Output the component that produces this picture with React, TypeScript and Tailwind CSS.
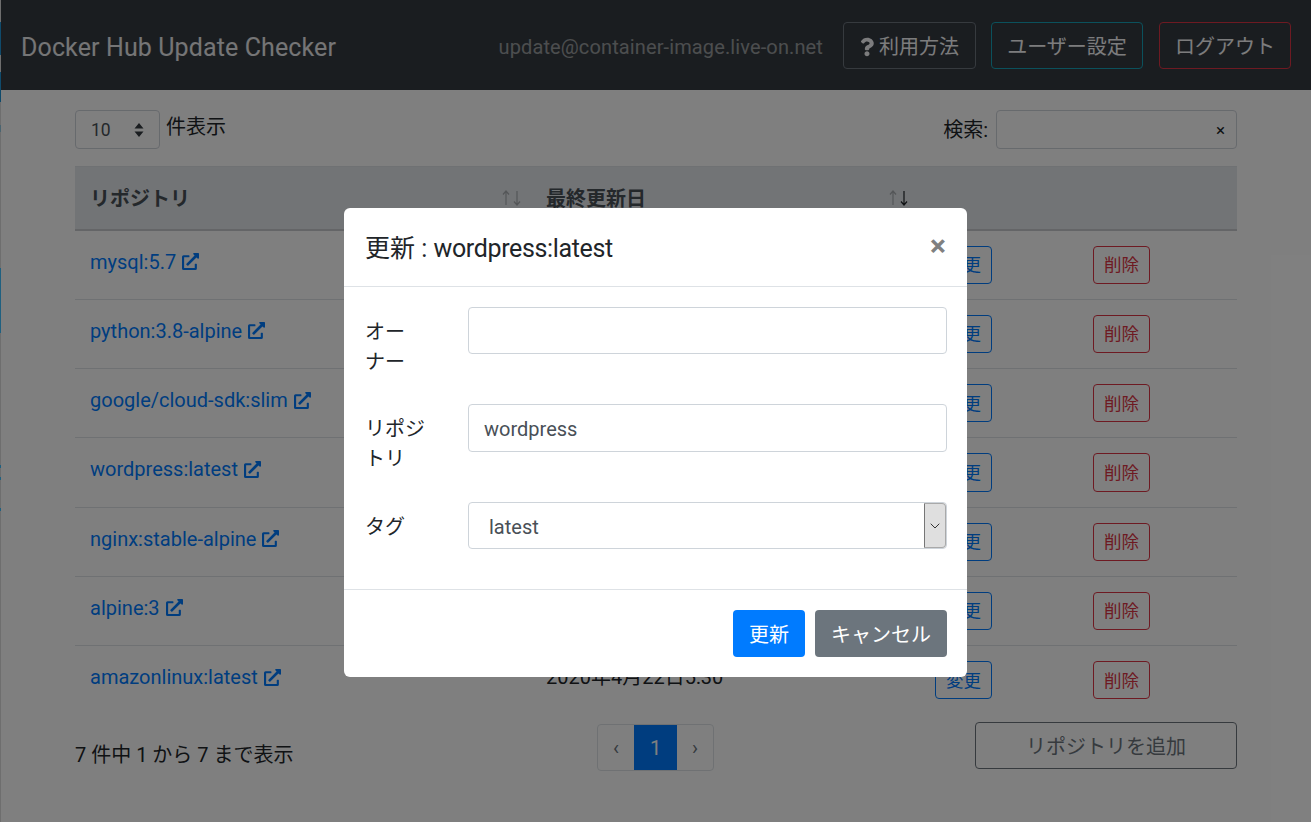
import { ChevronDown } from 'lucide-react'
import { FaExternalLinkAlt, FaQuestion } from 'react-icons/fa'

const rows = [
  { name: 'mysql:5.7', date: '2020年4月22日5:30' },
  { name: 'python:3.8-alpine', date: '2020年4月22日5:30' },
  { name: 'google/cloud-sdk:slim', date: '2020年4月22日5:30' },
  { name: 'wordpress:latest', date: '2020年4月22日5:30' },
  { name: 'nginx:stable-alpine', date: '2020年4月22日5:30' },
  { name: 'alpine:3', date: '2020年4月22日5:30' },
  { name: 'amazonlinux:latest', date: '2020年4月22日5:30' },
]

// the stray 1px window edge on the left of the shot
const edgeMarks = [
  { top: 22, height: 33, color: '#0f4a6b' },
  { top: 72, height: 30, color: '#0f4a6b' },
  { top: 125, height: 7, color: '#4a6470' },
  { top: 268, height: 65, color: '#1f6080' },
  { top: 465, height: 3, color: '#1f6080' },
  { top: 477, height: 3, color: '#1f6080' },
  { top: 508, height: 3, color: '#1f6080' },
]

function Arrow({ down, faded }: { down?: boolean; faded?: boolean }) {
  return (
    <svg viewBox="0 0 8 16" className={`h-4 w-2 fill-none stroke-[#212529] ${faded ? 'opacity-30' : ''}`} strokeWidth="1.2">
      {down ? <path d="M4 1v14M1 11.5 4 15l3-3.5" /> : <path d="M4 15V1M1 4.5 4 1l3 3.5" />}
    </svg>
  )
}

function SortArrows({ active }: { active?: boolean }) {
  return (
    <span className="-mt-[2px] flex gap-[3px]">
      <Arrow faded />
      <Arrow down faded={!active} />
    </span>
  )
}

function NavButton({ color, width, children }: { color: string; width: string; children: React.ReactNode }) {
  return (
    <button className={`flex h-[47px] items-center justify-center rounded border border-solid pt-[3px] text-[20px] text-[#f8f9fa] ${color} ${width}`}>
      {children}
    </button>
  )
}

export default function App() {
  return (
    <div className="relative h-[822px] w-[1311px] overflow-hidden bg-white font-['Roboto','Noto_Sans_CJK_JP',sans-serif] text-[20px] leading-[30px] text-[#212529]">
      <nav className="flex h-[90px] items-center justify-between bg-[#343a40] pl-[21px] pr-5">
        <span className="pt-[5px] text-[25px] tracking-[0.12px] text-white/90">Docker Hub Update Checker</span>
        <div className="flex items-center">
          <span className="mr-5 pt-[4px] text-[20px] tracking-[0.12px] text-white/50">update@container-image.live-on.net</span>
          <NavButton color="border-[#6c757d]" width="w-[133px] mr-[15px]">
            <FaQuestion className="mr-[5px] h-[20px] w-[14px]" />利用方法
          </NavButton>
          <NavButton color="border-[#17a2b8]" width="w-[152px] mr-[16px]">ユーザー設定</NavButton>
          <NavButton color="border-[#dc3545]" width="w-[132px]">ログアウト</NavButton>
        </div>
      </nav>

      <main className="pl-[75px] pr-[74px] pt-5">
        <div className="flex h-[39px] items-start justify-between">
          <div className="flex items-start">
            <div className="flex h-[39px] w-[85px] items-center justify-between rounded border border-[#ced4da] pl-[15px] pr-[15px] text-[17.5px] text-[#495057]">
              10
              <svg viewBox="0 0 10 16" className="h-4 w-[10px] fill-[#343a40]">
                <path d="M5 1 9.5 6.5H.5zM5 15 .5 9.5h9z" />
              </svg>
            </div>
            <span className="ml-[6px] mt-[2px]">件表示</span>
          </div>
          <div className="flex items-center">
            <span className="mr-2">検索:</span>
            <div className="flex h-[39px] w-[241px] items-center justify-end rounded border border-[#ced4da] pr-[11px] text-[17px]">×</div>
          </div>
        </div>

        <table className="mt-[17px] w-[1162px] table-fixed border-collapse">
          <thead>
            <tr className="h-[63px] border-t border-b-2 border-t-[#dee2e6] border-b-[#c8cbcf] bg-[#e4e8ec] text-left text-[#495057]">
              <th className="w-[456px] pl-[15px] pr-[10px] pt-[2px] font-bold">
                <div className="flex items-center justify-between">リポジトリ<SortArrows /></div>
              </th>
              <th className="w-[389px] pl-[15px] pr-[12px] pt-[2px] font-bold">
                <div className="flex items-center justify-between">最終更新日<SortArrows active /></div>
              </th>
              <th className="w-[158px]"></th>
              <th></th>
            </tr>
          </thead>
          <tbody>
            {rows.map((row) => (
              <tr key={row.name} className="border-b border-[#dee2e6] last:border-b-0">
                <td className="py-[15px] pl-[15px] align-top text-[#007bff]">
                  <span className="mt-[1px] flex items-center">
                    {row.name}
                    <FaExternalLinkAlt className="ml-[5px] h-[17px] w-[19px]" />
                  </span>
                </td>
                <td className="py-[15px] pl-[15px] align-top">
                  <span className="mt-[1px] block">{row.date}</span>
                </td>
                <td className="py-[15px] pl-[15px] align-top">
                  <button className="block h-[38.25px] w-[57px] rounded border border-[#007bff] pt-[1px] text-[17.5px] text-[#007bff]">変更</button>
                </td>
                <td className="py-[15px] pl-[15px] align-top">
                  <button className="block h-[38.25px] w-[57px] rounded border border-[#dc3545] pt-[1px] text-[17.5px] text-[#dc3545]">削除</button>
                </td>
              </tr>
            ))}
          </tbody>
        </table>

        <div className="flex items-start">
          <span className="mt-[26px] w-[522px]">7 件中 1 から 7 まで表示</span>
          <div className="mt-[10px] flex h-[47px] overflow-hidden rounded border border-[#dee2e6]">
            <span className="flex w-[36px] items-center justify-center text-[#6c757d]">‹</span>
            <span className="flex w-[43px] items-center justify-center bg-[#007bff] text-white">1</span>
            <span className="flex w-[36px] items-center justify-center text-[#6c757d]">›</span>
          </div>
          <button className="ml-auto mt-[8px] h-[47px] w-[262px] rounded border border-[#6c757d] pt-[2px] text-[#6c757d]">リポジトリを追加</button>
        </div>
      </main>

      {/* backdrop and modal lie over the page */}
      <div className="absolute inset-0 bg-black/50"></div>
      <div className="absolute left-[344px] top-[208px] w-[623px] rounded-md bg-white">
        <div className="flex h-[79px] items-center justify-between border-b border-[#dee2e6] pl-[21px] pr-[21px]">
          <span className="pt-[3px] text-[25px]">更新 : <span className="tracking-[-0.35px]">wordpress:latest</span></span>
          <span className="-mt-[2px] text-[30px] font-bold leading-none text-[#808080]">×</span>
        </div>
        <div className="h-[302px] pl-[21px] pr-5 pt-5">
          <div className="flex items-start">
            <span className="mb-[10px] mt-[10px] w-[103px] pr-[41px]">オー<br />ナー</span>
            <div className="h-[47px] flex-1 rounded border border-[#ced4da]"></div>
          </div>
          <div className="mt-[17px] flex items-start">
            <span className="mb-[10px] mt-[10px] w-[103px] pr-[41px]">リポジトリ</span>
            <div className="flex h-[48px] flex-1 items-center rounded border border-[#ced4da] pl-[15px] pt-[2px] text-[#495057]">wordpress</div>
          </div>
          <div className="mt-[18px] flex items-start">
            <span className="mb-[10px] mt-[10px] w-[103px] pr-[41px]">タグ</span>
            <div className="flex h-[47px] flex-1 items-center justify-between rounded border border-[#ced4da] pl-[20px] text-[#495057]">
              <span className="pt-[2px]">latest</span>
              <div className="flex h-full w-[22px] items-center justify-center rounded-r border border-[#a9a9a9] border-l-[#767676] bg-[#dfdfdf]">
                <ChevronDown className="h-4 w-4 text-[#333]" strokeWidth={1.5} />
              </div>
            </div>
          </div>
        </div>
        <div className="flex h-[88px] items-center justify-end gap-[10px] border-t border-[#dee2e6] pr-5">
          <button className="h-[47px] w-[72px] rounded bg-[#007bff] pt-[3px] text-white">更新</button>
          <button className="h-[47px] w-[132px] rounded bg-[#6c757d] pt-[3px] text-white">キャンセル</button>
        </div>
      </div>

      <div className="absolute inset-y-0 left-0 w-px bg-[#6e6e6e]">
        {edgeMarks.map((mark) => (
          <div key={mark.top} className="absolute w-px" style={{ top: mark.top, height: mark.height, backgroundColor: mark.color }}></div>
        ))}
      </div>
    </div>
  )
}
